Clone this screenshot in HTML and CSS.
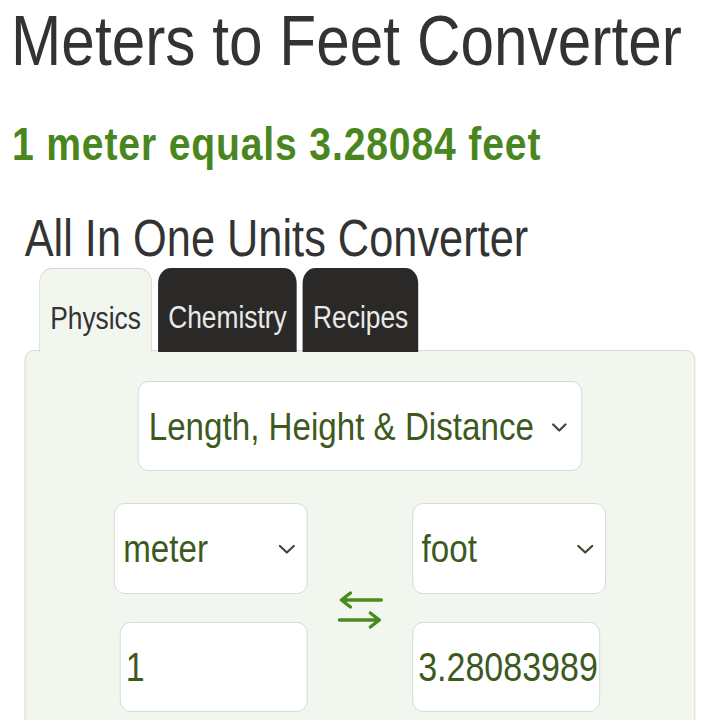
FILE: index.html
```html
<!DOCTYPE html>
<html lang="en">
<head>
<meta charset="utf-8">
<title>Meters to Feet Converter</title>
<link rel="stylesheet" href="styles.css">
</head>
<body>
<div class="page">
  <h1 class="title">Meters to Feet Converter</h1>
  <p class="answer">1 meter equals 3.28084 feet</p>
  <h2 class="subtitle">All In One Units Converter</h2>
  <div class="tabs">
    <span class="tab tab-active">Physics</span>
    <span class="tab tab-dark">Chemistry</span>
    <span class="tab tab-dark">Recipes</span>
  </div>
  <div class="panel">
    <div class="select-wrap category">
      <select class="select select-cat">
        <option>Length, Height &amp; Distance</option>
      </select>
      <svg class="chev chev-cat" viewBox="0 0 15 9" preserveAspectRatio="none"><path d="M1.5 1.5 L7.5 7.5 L13.5 1.5"/></svg>
    </div>
    <div class="grid">
      <div class="select-wrap unit">
        <select class="select select-unit">
          <option>meter</option>
        </select>
        <svg class="chev chev-unit" viewBox="0 0 18 10" preserveAspectRatio="none"><path d="M2 2 L9 8.5 L16 2"/></svg>
      </div>
      <svg class="swap" viewBox="0 0 46 40" preserveAspectRatio="none">
        <path d="M4 9 H44 M13 2 L4 9 L13 16"/>
        <path d="M2 29 H42 M33 22 L42 29 L33 36"/>
      </svg>
      <div class="select-wrap unit">
        <select class="select select-unit">
          <option>foot</option>
        </select>
        <svg class="chev chev-unit" viewBox="0 0 18 10" preserveAspectRatio="none"><path d="M2 2 L9 8.5 L16 2"/></svg>
      </div>
      <input class="num num-left" type="text" value="1">
      <input class="num num-right" type="text" value="3.28083989">
    </div>
  </div>
</div>
</body>
</html>
```
FILE: styles.css
```css
html, body {
  margin: 0;
  padding: 0;
  background: #ffffff;
  overflow: hidden;
}

.page {
  width: 836px;
  transform: scaleX(0.85);
  transform-origin: 0 0;
  font-family: "Liberation Sans", Arial, sans-serif;
}

.title {
  margin: 0 0 0 13px;
  font-size: 71px;
  line-height: 1.15;
  font-weight: normal;
  color: #333333;
  white-space: nowrap;
}

.answer {
  margin: 36px 0 0 14px;
  font-size: 46px;
  line-height: 1.15;
  font-weight: bold;
  letter-spacing: 1px;
  color: #4a8620;
  white-space: nowrap;
}

.subtitle {
  margin: 39px 0 0 29px;
  font-size: 51px;
  line-height: 1.15;
  font-weight: normal;
  color: #333333;
  white-space: nowrap;
}

.tabs {
  display: flex;
  gap: 7px;
  margin-left: 46px;
  height: 84px;
  position: relative;
  z-index: 1;
}

.tab {
  box-sizing: border-box;
  height: 84px;
  padding: 32px 12px 0;
  font-size: 31px;
  line-height: 1.15;
  border-radius: 15px 15px 0 0;
  white-space: nowrap;
}

.tab-active {
  background: #f1f6ee;
  color: #333333;
  border: 1px solid #d6d6d6;
  border-bottom: none;
}

.tab-dark {
  background: #2a2928;
  color: #e9e9e9;
}

.panel {
  box-sizing: border-box;
  margin: -2px 0 0 29px;
  width: 789px;
  padding: 30px 0 60px;
  background: #f1f6ee;
  border: 1px solid #d6d6d6;
  border-radius: 10px;
}

.select-wrap {
  position: relative;
  box-sizing: border-box;
}

.category {
  width: 523px;
  height: 90px;
  margin: 0 auto;
}

.select {
  appearance: none;
  -webkit-appearance: none;
  box-sizing: border-box;
  width: 100%;
  height: 100%;
  margin: 0;
  background: #ffffff;
  border: 1px solid #d5d8d2;
  border-radius: 12px;
  font-family: "Liberation Sans", Arial, sans-serif;
  font-size: 39px;
  color: #3c5a1e;
  outline: none;
}

.select-cat {
  padding: 0 40px 0 12px;
}

.select-unit {
  padding: 0 40px 0 10px;
}

.chev {
  position: absolute;
  right: 14px;
  top: 50%;
  fill: none;
  stroke: #3d4a32;
  stroke-width: 2.2;
  stroke-linecap: round;
  stroke-linejoin: round;
  pointer-events: none;
}

.chev-cat {
  width: 18px;
  height: 9px;
  margin-top: -3px;
  right: 18px;
}

.chev-unit {
  width: 21px;
  height: 10px;
  margin-top: -5px;
}

.grid {
  display: grid;
  grid-template-columns: 228px 123px 228px;
  grid-template-rows: 91px 90px;
  row-gap: 28px;
  justify-content: center;
  margin-top: 32px;
}

.unit {
  width: 228px;
  height: 91px;
}

.swap {
  grid-column: 2;
  grid-row: 1 / 3;
  align-self: center;
  justify-self: center;
  width: 54px;
  height: 40px;
  margin-top: 6px;
  fill: none;
  stroke: #4a8a1e;
  stroke-width: 3.4;
  stroke-linecap: round;
  stroke-linejoin: round;
}

.num {
  box-sizing: border-box;
  width: 221px;
  height: 90px;
  margin: 0;
  padding: 0 1px 0 6px;
  background: #ffffff;
  border: 1px solid #d5d8d2;
  border-radius: 12px;
  font-family: "Liberation Sans", Arial, sans-serif;
  font-size: 40px;
  color: #3c5a1e;
  outline: none;
}

.num-left {
  grid-column: 1;
  grid-row: 2;
  justify-self: end;
}

.num-right {
  grid-column: 3;
  grid-row: 2;
  justify-self: start;
}
```
